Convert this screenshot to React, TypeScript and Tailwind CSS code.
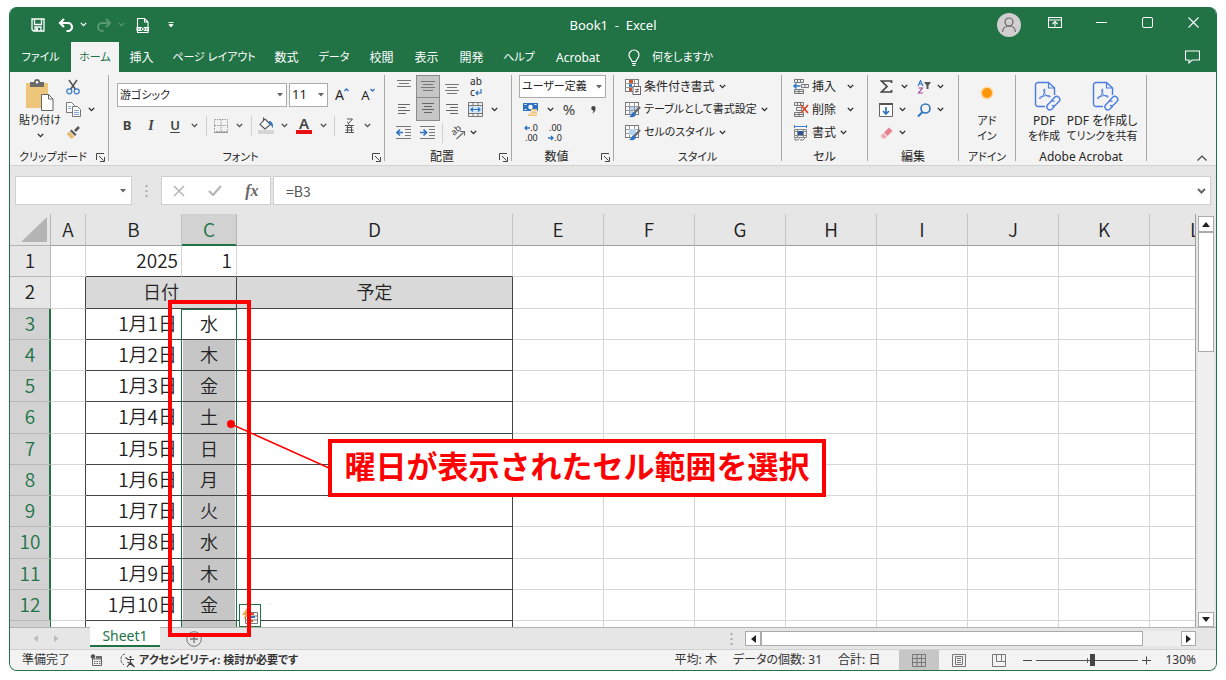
import { useState, type ReactNode } from "react";

// ─── Data ─────────────────────────────────────────────────────────────────────

const TABS = [
  { label: "ファイル", className: "w-[61px] text-[11px]" },
  { label: "ホーム", className: "w-[48px] text-[11px]" },
  { label: "挿入", className: "w-[45px]" },
  { label: "ページ レイアウト", className: "w-[100px] text-[11px]" },
  { label: "数式", className: "w-[45px]" },
  { label: "データ", className: "w-[50px] text-[11px]" },
  { label: "校閲", className: "w-[45px]" },
  { label: "表示", className: "w-[45px]" },
  { label: "開発", className: "w-[45px]" },
  { label: "ヘルプ", className: "w-[50px] text-[11px]" },
  { label: "Acrobat", className: "w-[68px]" },
];

const COLUMNS = [
  { name: "A", width: "w-[35px]" },
  { name: "B", width: "w-[96px]" },
  { name: "C", width: "w-[55px]" },
  { name: "D", width: "w-[276px]" },
  { name: "E", width: "w-[91px]" },
  { name: "F", width: "w-[91px]" },
  { name: "G", width: "w-[91px]" },
  { name: "H", width: "w-[91px]" },
  { name: "I", width: "w-[91px]" },
  { name: "J", width: "w-[91px]" },
  { name: "K", width: "w-[91px]" },
  { name: "L", width: "w-[91px]" },
];

const EMPTY_COLUMNS = COLUMNS.slice(4);

const DAYS = [
  { row: 3, date: "1月1日", day: "水" },
  { row: 4, date: "1月2日", day: "木" },
  { row: 5, date: "1月3日", day: "金" },
  { row: 6, date: "1月4日", day: "土" },
  { row: 7, date: "1月5日", day: "日" },
  { row: 8, date: "1月6日", day: "月" },
  { row: 9, date: "1月7日", day: "火" },
  { row: 10, date: "1月8日", day: "水" },
  { row: 11, date: "1月9日", day: "木" },
  { row: 12, date: "1月10日", day: "金" },
];

// ─── Small building blocks ────────────────────────────────────────────────────

function Svg({ w, h, children }: { w: number; h: number; children: ReactNode }) {
  return (
    <svg width={w} height={h} viewBox={`0 0 ${w} ${h}`} fill="none" className="shrink-0" aria-hidden="true">
      {children}
    </svg>
  );
}

function Chevron({ className = "" }: { className?: string }) {
  return (
    <svg width="7" height="5" viewBox="0 0 7 5" fill="none" className={["shrink-0", className].join(" ")} aria-hidden="true">
      <path d="M0.8 0.9 3.5 3.6 6.2 0.9" stroke="currentColor" strokeWidth="1.3" />
    </svg>
  );
}

function Caret() {
  return (
    <Svg w={6} h={4}>
      <path d="M0 0h6L3 3.5z" fill="#666" />
    </Svg>
  );
}

function Btn({ label, className = "w-6", children }: { label: string; className?: string; children: ReactNode }) {
  return (
    <button type="button" aria-label={label} title={label} className={["flex h-[23px] shrink-0 items-center justify-center", className].join(" ")}>
      {children}
    </button>
  );
}

function Drop({ label, className = "w-4" }: { label: string; className?: string }) {
  return (
    <Btn label={label} className={className}>
      <Chevron />
    </Btn>
  );
}

function Divider() {
  return <span className="h-5 w-px shrink-0 bg-[#d0d0d0]" />;
}

function Group({ title, className, launcher, children }: { title: string; className: string; launcher?: boolean; children: ReactNode }) {
  return (
    <section aria-label={title} className={["flex shrink-0", className].join(" ")}>
      <div className="flex min-w-0 flex-1 flex-col">
        <div className="h-[75px]">{children}</div>
        <div className="flex h-[14px] items-center">
          <h2 className="flex-1 text-center whitespace-nowrap">{title}</h2>
          {launcher && (
            <button type="button" aria-label={`${title}の設定`} className="mr-[3px]">
              <Svg w={9} h={9}>
                <path d="M0.5 7V0.5H8M3 3l4.5 4.5M8.5 4v4.5H4" stroke="#444" />
              </Svg>
            </button>
          )}
        </div>
      </div>
      <span className="h-[86px] w-px bg-[#a8a8a8]" />
    </section>
  );
}

function Combo({ label, value, className }: { label: string; value: string; className: string }) {
  return (
    <div className={["relative shrink-0", className].join(" ")}>
      <select aria-label={label} className="h-full w-full appearance-none border border-[#ababab] bg-white pl-[2px]">
        <option>{value}</option>
      </select>
      <span className="pointer-events-none absolute inset-y-0 right-1 flex items-center">
        <Caret />
      </span>
    </div>
  );
}

// ─── Icons ────────────────────────────────────────────────────────────────────

function PasteIcon() {
  return (
    <Svg w={30} h={33}>
      <rect x="1" y="4" width="22" height="25" fill="#edc57b" />
      <path d="M5 3h4a3 3 0 0 1 6 0h4v5H5z" fill="#6a6a6a" />
      <circle cx="12" cy="3.2" r="1.2" fill="#fff" />
      <path d="M16.5 15.5h7l4.5 4.5v11.5h-11.5z" fill="#fff" stroke="#666" />
      <path d="M23.5 15.5v4.5H28" stroke="#666" />
    </Svg>
  );
}

function CutIcon() {
  return (
    <Svg w={14} h={16}>
      <path d="M3 1l6.5 9.5M11 1 4.5 10.5" stroke="#555" strokeWidth="1.5" />
      <circle cx="3.3" cy="12.3" r="2.5" stroke="#3f7fca" strokeWidth="1.3" />
      <circle cx="10.7" cy="12.3" r="2.5" stroke="#3f7fca" strokeWidth="1.3" />
    </Svg>
  );
}

function CopyIcon() {
  return (
    <Svg w={15} h={15}>
      <path d="M0.5 0.5h5l3 3v7h-8z" fill="#fff" stroke="#777" />
      <path d="M6.5 4.5h5l3 3v7h-8z" fill="#fff" stroke="#777" />
      <path d="M2 4.5h3M2 6.5h3M8 8.5h5M8 10.5h5M8 12.5h5" stroke="#7fa8d8" />
    </Svg>
  );
}

function BrushIcon() {
  return (
    <Svg w={14} h={13}>
      <path d="M13 1 9 5" stroke="#555" strokeWidth="2.5" />
      <path d="m5.5 3.5 5 5-1.5 1.5-5-5z" fill="#555" />
      <path d="m3.5 5.5 5 5-3 2.5L0.5 8z" fill="#e8bd72" />
    </Svg>
  );
}

function LinesIcon({ rows }: { rows: [number, number][] }) {
  return (
    <Svg w={14} h={14}>
      {rows.map(([x, w], i) => (
        <path key={i} d={`M${x} ${1.5 + i * 3}h${w}`} stroke="#666" />
      ))}
    </Svg>
  );
}

function IndentIcon({ right }: { right?: boolean }) {
  return (
    <Svg w={16} h={13}>
      <path d="M0 0.5h15M9 3.5h6M9 6.5h6M9 9.5h6M0 12.5h15" stroke="#777" />
      <path d={right ? "M0 6.5h6M3.5 3.5l3 3-3 3" : "M7 6.5H1M4 3.5l-3 3 3 3"} stroke="#2f72c0" strokeWidth="1.7" />
    </Svg>
  );
}

function TableIcon({ kind }: { kind: "rule" | "table" | "cell" }) {
  return (
    <Svg w={16} h={16}>
      <rect x="0.5" y="0.5" width="13" height="12" fill="#fff" stroke="#777" />
      <path d="M0.5 4.5h13M0.5 8.5h13M4.5 0.5v12M9.5 0.5v12" stroke="#999" />
      {kind === "rule" ? (
        <>
          <path d="M4 1h4v3H4zM4 9h3v3H4z" fill="#d35230" />
          <path d="M4 5h3v3H4z" fill="#3f7fca" />
          <rect x="8" y="7.5" width="7.5" height="8" fill="#fff" stroke="#666" />
          <path d="M10 10.5h4M10 12.5h4M13 9.5l-2 4.5" stroke="#555" strokeWidth="0.8" />
        </>
      ) : (
        <>
          <path d={kind === "table" ? "M5 5h4v3H5zM10 5h3v3h-3zM5 9h3v3H5z" : "M4 4h7v6H4z"} fill="#b8d3ee" />
          <path d="M15 5 9.5 11" stroke="#666" strokeWidth="2.2" />
          <path d="M9 10c-2.500 0-2 3.500-5 4.500 3 1.500 7 0.500 7-2.500z" fill="#2f72c0" />
        </>
      )}
    </Svg>
  );
}

function CellsIcon({ kind }: { kind: "insert" | "delete" | "format" }) {
  if (kind === "format") {
    return (
      <Svg w={15} h={16}>
        <path d="M2 1.5h11M1.5 0v3M13.5 0v3" stroke="#3f7fca" />
        <path d="M1.5 4.5h12v8h-12zM1.5 6.5h12M1.5 10.5h12M4.5 4.5v8M10.5 4.5v8" stroke="#888" />
        <path d="M5 6h5v4H5z" fill="#2b5797" />
        <path d="M2 13v2h3l1.5-1.5M7 15h3l2-2" stroke="#777" />
      </Svg>
    );
  }
  return (
    <Svg w={16} h={15}>
      <path d="M1.5 0.5h9v3h-9zM4.5 0.5v3M7.5 0.5v3M1.5 10.5h9v4h-9zM6 10.5v4M1.5 12.5h9" stroke="#777" />
      {kind === "insert" ? (
        <>
          <path d="M8.5 5.5h7v3h-7zM12 5.5v3" stroke="#777" />
          <path d="M7.5 7H1M3.5 4.5 1 7l2.5 2.5" stroke="#2f72c0" strokeWidth="1.4" />
        </>
      ) : (
        <>
          <path d="M3.5 5.5h5v3h-5z" stroke="#777" />
          <path d="m8 3 7 8M15 3l-7 8" stroke="#d24726" strokeWidth="1.8" />
        </>
      )}
    </Svg>
  );
}

function PdfIcon() {
  return (
    <Svg w={27} h={30}>
      <path d="M11 25.500H4a2.500 2.500 0 0 1-2.500-2.500V4A2.500 2.500 0 0 1 4 1.500h10.500L20.500 7v7" stroke="#4a7be0" strokeWidth="1.4" />
      <path d="M14.5 1.5V7h6" stroke="#4a7be0" strokeWidth="1.2" />
      <path d="M5.500 17.500c-1.500-1.500 5.500-3 8-3 3.500 0 3.500 2 1.500 1.500-2.500-.8-5.500-4-5.300-7 .3-2 1.800-1 1 1.500-.7 2.500-3.200 8-5.200 7z" stroke="#4a7be0" />
      <g stroke="#4a7be0" strokeWidth="1.4">
        <path d="m17 20 3.500-3.500a3 3 0 0 1 4.500 4l-3.500 3.500a3 3 0 0 1-3.500.3" />
        <path d="M20.500 20.500a3 3 0 0 0-3.800.3L13.500 24a3 3 0 0 0 4.200 4.200l3-3" />
      </g>
    </Svg>
  );
}

// ─── Title bar and tabs ───────────────────────────────────────────────────────

function TitleBar() {
  return (
    <header className="relative flex h-[35px] items-center bg-[#217346] text-white">
      <div className="flex items-center pl-5">
        <button type="button" aria-label="上書き保存" className="flex w-4 justify-center">
          <Svg w={14} h={14}>
            <path d="M1 1h12v12H2.5L1 11.5zM3.5 1.5v5h7v-5M4 13V9h6v4" stroke="#fff" strokeWidth="1.3" />
            <path d="M5 10h2v3H5z" fill="#fff" />
          </Svg>
        </button>
        <button type="button" aria-label="元に戻す" className="ml-3 flex w-4 justify-center">
          <Svg w={16} h={14}>
            <path d="M6 1 2 5l4 4M2 5h8a4 4 0 0 1 0 8H8.5" stroke="#fff" strokeWidth="2.2" />
          </Svg>
        </button>
        <Chevron className="ml-[6px]" />
        <button type="button" aria-label="やり直し" className="ml-[9px] flex w-4 justify-center opacity-25">
          <Svg w={16} h={14}>
            <path d="m10 1 4 4-4 4M14 5H6a4 4 0 0 0 0 8h1.5" stroke="#fff" strokeWidth="2" />
          </Svg>
        </button>
        <Chevron className="ml-[6px] opacity-25" />
        <button type="button" aria-label="印刷プレビュー" className="ml-[10px] flex w-4 justify-center">
          <Svg w={14} h={16}>
            <path d="M1.5 10V1.5h7l3.5 3.5v5M8.5 1.5V5H12M1.5 14v1.5H12V14" stroke="#fff" strokeWidth="1.1" />
            <rect x="0.5" y="10" width="12.5" height="4" fill="#fff" />
            <circle cx="6.8" cy="12" r="1.5" stroke="#217346" />
            <path d="M2 12h1.5M10 12h1.5" stroke="#217346" />
          </Svg>
        </button>
        <button type="button" aria-label="クイック アクセスのカスタマイズ" className="ml-3 flex w-4 justify-center">
          <Svg w={6} h={6}>
            <path d="M0.5 0.5h5M1 2.5h4L3 5z" stroke="#fff" fill="#fff" strokeWidth="0.9" />
          </Svg>
        </button>
      </div>

      <h1 className="absolute inset-x-0 pt-[2px] text-center text-[13px]">Book1&nbsp; -&nbsp; Excel</h1>

      <div className="relative ml-auto flex items-center pr-[15px]">
        <button type="button" aria-label="アカウント" className="flex w-6 justify-center">
          <Svg w={24} h={24}>
            <circle cx="12" cy="12" r="12" fill="#d0cece" />
            <circle cx="12" cy="9" r="4" stroke="#666" strokeWidth="1.2" />
            <path d="M5.5 19c.3-4 2.500-6 6.500-6s6.200 2 6.500 6" stroke="#666" strokeWidth="1.2" />
          </Svg>
        </button>
        <button type="button" aria-label="リボンの表示オプション" className="-mt-1 ml-[26px] flex w-4 justify-center">
          <Svg w={14} h={11}>
            <path d="M0.5 0.5h13v10H0.5zM0.5 3h13M7 9.5V5M4.5 7 7 4.5 9.5 7" stroke="#fff" strokeWidth="1.1" />
          </Svg>
        </button>
        <button type="button" aria-label="最小化" className="-mt-1 ml-[30px] flex w-4 justify-center">
          <Svg w={11} h={11}>
            <path d="M0 5.5h11" stroke="#fff" />
          </Svg>
        </button>
        <button type="button" aria-label="最大化" className="-mt-1 ml-[30px] flex w-4 justify-center">
          <Svg w={11} h={11}>
            <rect x="0.5" y="0.5" width="10" height="10" rx="1.5" stroke="#fff" />
          </Svg>
        </button>
        <button type="button" aria-label="閉じる" className="-mt-1 ml-[30px] flex w-4 justify-center">
          <Svg w={11} h={11}>
            <path d="m0.5 0.5 10 10M10.5 0.5l-10 10" stroke="#fff" strokeWidth="1.1" />
          </Svg>
        </button>
      </div>
    </header>
  );
}

function TabStrip({ active, onSelect }: { active: string; onSelect: (label: string) => void }) {
  return (
    <nav className="flex h-[30px] items-stretch bg-[#217346] text-white">
      {TABS.map((tab) => (
        <button
          key={tab.label}
          type="button"
          onClick={() => onSelect(tab.label)}
          className={[
            "shrink-0 pt-px text-center whitespace-nowrap",
            tab.className,
            active === tab.label ? "bg-[#f3f3f3] text-[#217346]" : "",
          ].join(" ")}
        >
          {tab.label}
        </button>
      ))}
      <button type="button" className="ml-4 flex items-center gap-3 text-[11px] whitespace-nowrap">
        <Svg w={12} h={17}>
          <path d="M4 12.500c0-2-3-3-3-6.500a5 5 0 0 1 10 0c0 3.500-3 4.500-3 6.500zM4 14.500h4M4.500 16.300h3" stroke="#fff" strokeWidth="1.2" />
        </Svg>
        何をしますか
      </button>
      <button type="button" aria-label="コメント" className="mr-4 ml-auto flex items-center">
        <Svg w={15} h={14}>
          <path d="M0.5 1h14v9H7l-3 3v-3H0.5z" stroke="#fff" strokeWidth="1.1" />
        </Svg>
      </button>
    </nav>
  );
}

// ─── Ribbon ───────────────────────────────────────────────────────────────────

function Ribbon() {
  return (
    <div className="flex h-[94px] border-b border-[#d2d2d2] bg-[#f3f3f3] pt-[3px] pb-px text-[#262626]">
      <Group title="クリップボード" className="w-[99px] text-[11px]" launcher>
        <div className="flex pl-2">
          <button type="button" className="flex w-11 flex-col items-center pt-1">
            <PasteIcon />
            <span className="leading-4 whitespace-nowrap">貼り付け</span>
            <Chevron className="mt-[5px]" />
          </button>
          <div className="ml-[1px] flex flex-col">
            <Btn label="切り取り" className="w-5">
              <CutIcon />
            </Btn>
            <div className="flex">
              <Btn label="コピー" className="w-5">
                <CopyIcon />
              </Btn>
              <Drop label="コピーのオプション" />
            </div>
            <Btn label="書式のコピー" className="w-5">
              <BrushIcon />
            </Btn>
          </div>
        </div>
      </Group>

      <Group title="フォント" className="w-[276px] text-[11px]" launcher>
        <div className="flex items-center gap-[2px] pt-2 pl-2">
          <Combo label="フォント名" value="游ゴシック" className="h-6 w-[170px]" />
          <Combo label="フォント サイズ" value="11" className="h-6 w-[39px] text-[13px]" />
          <Btn label="フォント サイズの拡大" className="w-6">
            <span className="text-[14px] leading-4">A</span>
            <Svg w={5} h={14}>
              <path d="M0.5 3 2.5 1l2 2" stroke="#2f72c0" strokeWidth="1.3" />
            </Svg>
          </Btn>
          <Btn label="フォント サイズの縮小" className="w-6">
            <span className="text-[13px] leading-4">A</span>
            <Svg w={5} h={14}>
              <path d="m0.5 1 2 2 2-2" stroke="#2f72c0" strokeWidth="1.3" />
            </Svg>
          </Btn>
        </div>
        <div className="flex items-center pt-[7px] pl-[6px] text-[#444]">
          <Btn label="太字" className="w-6">
            <b className="text-[13px]">B</b>
          </Btn>
          <Btn label="斜体" className="w-6">
            <i className="font-['Liberation_Serif',serif] text-[14px] font-bold">I</i>
          </Btn>
          <Btn label="下線" className="w-6">
            <span className="text-[13px] font-semibold underline underline-offset-2">U</span>
          </Btn>
          <Drop label="下線の種類" className="w-[14px]" />
          <span className="w-[5px]" />
          <Divider />
          <Btn label="罫線" className="ml-1 w-5">
            <Svg w={14} h={14}>
              <path d="M0.5 0.5h13v12H0.5zM7 0.5v12M0.5 6.5h13" stroke="#999" strokeDasharray="1.5 1" />
              <path d="M0 13.5h14" stroke="#999" />
            </Svg>
          </Btn>
          <Drop label="罫線の種類" />
          <span className="w-1" />
          <Divider />
          <Btn label="塗りつぶしの色" className="ml-1 w-5">
            <Svg w={17} h={17}>
              <path d="m7 2 5.5 5.5L7 12 2 7.5zM5.5 0.5v4" stroke="#555" strokeWidth="1.1" fill="#fff" />
              <path d="M11 4c3 0 4.500 3 4 7-1.500-1-1.500-4-4-4z" fill="#2f72c0" />
              <rect y="13" width="16" height="4" fill="#d6d6d6" />
            </Svg>
          </Btn>
          <Drop label="塗りつぶしの色を選択" />
          <Btn label="フォントの色" className="w-6">
            <span className="flex h-[17px] w-4 items-end justify-center border-b-4 border-[#e81010] text-[15px] leading-[13px] font-semibold">A</span>
          </Btn>
          <Drop label="フォントの色を選択" className="w-[14px]" />
          <span className="w-1" />
          <Divider />
          <Btn label="ふりがな" className="ml-1 w-5">
            <Svg w={11} h={15}>
              <path d="M3 1h5.5L5 5M3.5 3.5 5 7M1 7.5h9M1 14.5h9M2.5 9.5h6M1.5 12h8M3.5 7.5v7M7.5 7.5v7" stroke="#555" />
            </Svg>
          </Btn>
          <Drop label="ふりがなのオプション" />
        </div>
      </Group>

      <Group title="配置" className="w-[127px]" launcher>
        <div className="flex flex-col pl-[7px]">
          <div className="flex">
            <Btn label="上揃え">
              <Svg w={14} h={14}>
                <path d="M0 0.5h14M2 3.5h10M0 6.5h14" stroke="#777" />
              </Svg>
            </Btn>
            <Btn label="上下中央揃え" className="w-6 border border-[#8c8c8c] bg-[#c6c6c6]">
              <Svg w={14} h={14}>
                <path d="M0 1.5h14M2 4.5h10M0 7.5h14M2 10.5h10" stroke="#777" />
              </Svg>
            </Btn>
            <Btn label="下揃え">
              <Svg w={14} h={14}>
                <path d="M0 4.5h14M2 7.5h10M0 10.5h14M2 13.5h10" stroke="#777" />
              </Svg>
            </Btn>
            <Btn label="折り返して全体を表示する">
              <span className="flex flex-col text-[10px] leading-[11px]">
                <span>ab</span>
                <span className="flex items-center">
                  c
                  <Svg w={7} h={7}>
                    <path d="M6 0v4H1M3 2 1 4l2 2" stroke="#2f72c0" strokeWidth="1.2" />
                  </Svg>
                </span>
              </span>
            </Btn>
          </div>
          <div className="flex">
            <Btn label="左揃え">
              <LinesIcon rows={[[1, 12], [1, 8], [1, 12], [1, 8]]} />
            </Btn>
            <Btn label="中央揃え" className="w-6 border border-t-0 border-[#8c8c8c] bg-[#c6c6c6]">
              <LinesIcon rows={[[1, 12], [3, 8], [1, 12], [3, 8]]} />
            </Btn>
            <Btn label="右揃え">
              <LinesIcon rows={[[1, 12], [5, 8], [1, 12], [5, 8]]} />
            </Btn>
            <Btn label="セルを結合して中央揃え">
              <Svg w={16} h={15}>
                <path d="M0.5 0.5h14v14h-14zM0.5 3.5h14M0.5 11.5h14M5 0.5v3M10 0.5v3M5 11.5v3M10 11.5v3" stroke="#777" />
                <path d="M1 4h13v7H1z" fill="#d5e6f7" />
                <path d="M2.5 7.5h10M5 5.5l-2 2 2 2M10 5.5l2 2-2 2" stroke="#2f72c0" strokeWidth="1.2" />
              </Svg>
            </Btn>
            <Drop label="結合のオプション" className="w-3" />
          </div>
          <div className="flex items-center">
            <Btn label="インデントを減らす">
              <IndentIcon />
            </Btn>
            <Btn label="インデントを増やす">
              <IndentIcon right />
            </Btn>
            <span className="w-[2px]" />
            <Divider />
            <Btn label="方向" className="ml-[2px] w-6">
              <Svg w={17} h={17}>
                <text x="5" y="12" fontSize="9" fill="#444" transform="rotate(-42 5 12)">ab</text>
                <path d="M7.5 15 14.5 8.5M11 7.5h4.5v4" stroke="#666" strokeWidth="1.1" />
              </Svg>
            </Btn>
            <Drop label="方向のオプション" className="w-2" />
          </div>
        </div>
      </Group>

      <Group title="数値" className="w-[102px]" launcher>
        <div className="flex flex-col pl-[7px]">
          <Combo label="表示形式" value="ユーザー定義" className="h-[23px] w-[87px] text-[11px]" />
          <div className="flex">
            <Btn label="通貨表示形式">
              <Svg w={16} h={15}>
                <rect x="0" y="1" width="15" height="8" fill="#2f72c0" />
                <path d="M1.5 2.5h2M11.5 2.5h2M1.5 7.5h2" stroke="#fff" />
                <circle cx="7.5" cy="5" r="2.2" fill="#fff" />
                <path d="M8 7h6v7H8zM5 11h5v3H5z" fill="#edc57b" />
                <path d="M8 9h6M5 12h9" stroke="#fff" strokeWidth="0.7" />
              </Svg>
            </Btn>
            <Drop label="通貨のオプション" className="w-[14px]" />
            <Btn label="パーセント スタイル" className="w-6">
              <span className="text-[15px] text-[#444]">%</span>
            </Btn>
            <Btn label="桁区切りスタイル" className="w-6">
              <Svg w={5} h={8}>
                <path d="M2.500 0a2 2 0 0 1 2 2.500C4.500 5 3 7 1 7.500 2 6.500 2.500 5.500 2.500 4.500A2.200 2.200 0 0 1 2.500 0z" fill="#444" />
              </Svg>
            </Btn>
          </div>
          <div className="flex text-[9px] leading-[10px]">
            <Btn label="小数点以下の表示桁数を増やす">
              <span className="flex flex-col items-end">
                <span className="flex items-center">
                  <Svg w={6} h={6}>
                    <path d="M6 3H1M3 1 1 3l2 2" stroke="#2f72c0" strokeWidth="1.3" />
                  </Svg>
                  .0
                </span>
                <span>.00</span>
              </span>
            </Btn>
            <Btn label="小数点以下の表示桁数を減らす">
              <span className="flex flex-col items-end">
                <span>.00</span>
                <span className="flex items-center">
                  <Svg w={6} h={6}>
                    <path d="M0 3h5M3 1l2 2-2 2" stroke="#2f72c0" strokeWidth="1.3" />
                  </Svg>
                  .0
                </span>
              </span>
            </Btn>
          </div>
        </div>
      </Group>

      <Group title="スタイル" className="w-[168px] text-[11px]">
        <div className="flex flex-col items-start pl-[11px] whitespace-nowrap">
          <button type="button" className="flex h-[23px] items-center gap-[3px] text-[12px]">
            <TableIcon kind="rule" />
            条件付き書式
            <Chevron className="ml-[1px]" />
          </button>
          <button type="button" className="flex h-[23px] items-center gap-[3px]">
            <TableIcon kind="table" />
            テーブルとして書式設定
            <Chevron className="ml-[1px]" />
          </button>
          <button type="button" className="flex h-[23px] items-center gap-[3px]">
            <TableIcon kind="cell" />
            セルのスタイル
            <Chevron className="ml-[1px]" />
          </button>
        </div>
      </Group>

      <Group title="セル" className="w-[86px]">
        <div className="flex flex-col items-start pl-[11px] whitespace-nowrap">
          <button type="button" className="flex h-[23px] items-center gap-[3px]">
            <CellsIcon kind="insert" />
            挿入
            <Chevron className="ml-2" />
          </button>
          <button type="button" className="flex h-[23px] items-center gap-[3px]">
            <CellsIcon kind="delete" />
            削除
            <Chevron className="ml-2" />
          </button>
          <button type="button" className="flex h-[23px] items-center gap-1">
            <CellsIcon kind="format" />
            書式
            <Chevron />
          </button>
        </div>
      </Group>

      <Group title="編集" className="w-[91px]">
        <div className="flex flex-col pl-2">
          <div className="flex">
            <Btn label="オート SUM" className="w-5">
              <Svg w={13} h={13}>
                <path d="M11.5 3V1H1.5L7 6.5 1.5 12h10v-2" stroke="#444" strokeWidth="1.7" />
              </Svg>
            </Btn>
            <Drop label="オート SUM のオプション" />
            <Btn label="並べ替えとフィルター" className="w-6">
              <Svg w={14} h={14}>
                <path d="M1 6 3.500 0.500 6 6M2 4h3" stroke="#2f72c0" strokeWidth="1.1" />
                <path d="M1.500 8h4l-4 5h4.500" stroke="#a349a4" strokeWidth="1.2" />
                <path d="M7 2h7l-2.500 3.500V9h-2V5.500z" fill="#555" />
              </Svg>
            </Btn>
            <Drop label="並べ替えのオプション" className="w-2" />
          </div>
          <div className="flex">
            <Btn label="フィル" className="w-5">
              <Svg w={14} h={14}>
                <path d="M0.5 0.5h13v13h-13z" fill="#fff" stroke="#666" />
                <path d="M0 1h14" stroke="#555" strokeWidth="2" />
                <path d="M7 4v7M4 8l3 3 3-3" stroke="#2f72c0" strokeWidth="1.7" />
              </Svg>
            </Btn>
            <Drop label="フィルのオプション" className="w-3" />
            <Btn label="検索と選択" className="ml-1 w-6">
              <Svg w={14} h={14}>
                <circle cx="8.5" cy="5.5" r="4.5" stroke="#2f72c0" strokeWidth="1.6" />
                <path d="M5.5 9 1 13.5" stroke="#2f72c0" strokeWidth="2" />
              </Svg>
            </Btn>
            <Drop label="検索のオプション" className="w-2" />
          </div>
          <div className="flex">
            <Btn label="クリア" className="w-5">
              <Svg w={13} h={12}>
                <path d="m9 0.5 3.5 3.5-5 5L4 5.5z" fill="#e8808f" />
                <path d="m3.3 6.2 3.5 3.5L5 11.5H3L0.5 9z" fill="#f0a5b0" />
              </Svg>
            </Btn>
            <Drop label="クリアのオプション" className="w-3" />
          </div>
        </div>
      </Group>

      <Group title="アドイン" className="w-[57px] text-[11px]">
        <button type="button" className="flex w-full flex-col items-center pt-[11px] leading-[15px]">
          <Svg w={14} h={14}>
            <circle cx="7" cy="7" r="6.5" fill="#ffd9a0" />
            <circle cx="7" cy="7" r="5" fill="#ff960a" />
          </Svg>
          <span className="mt-[13px]">アド</span>
          <span>イン</span>
        </button>
      </Group>

      <Group title="Adobe Acrobat" className="w-[131px]">
        <div className="flex leading-[15px] whitespace-nowrap">
          <button type="button" className="flex w-[56px] flex-col items-center pt-[6px]">
            <span className="pl-[6px]">
              <PdfIcon />
            </span>
            <span className="mt-[2px]">PDF</span>
            <span className="text-[11px]">を作成</span>
          </button>
          <button type="button" className="flex w-[60px] flex-col items-center pt-[6px]">
            <span className="pl-[6px]">
              <PdfIcon />
            </span>
            <span className="mt-[2px]">PDF を作成し</span>
            <span className="text-[11px]">てリンクを共有</span>
          </button>
        </div>
      </Group>

      <button type="button" aria-label="リボンを折りたたむ" className="mr-[9px] ml-auto self-end pb-[3px]">
        <Svg w={10} h={6}>
          <path d="m0.5 5.5 4.5-4.5L9.5 5.5" stroke="#444" strokeWidth="1.2" />
        </Svg>
      </button>
    </div>
  );
}

// ─── Formula bar ──────────────────────────────────────────────────────────────

function FormulaBar() {
  return (
    <div className="flex h-12 bg-[#e6e6e6] pt-[10px] pr-[5px] pb-[9px] pl-[5px]">
      <div className="flex w-[117px] items-center border border-[#cfcfcf] bg-white pr-[5px]">
        <input aria-label="名前ボックス" className="min-w-0 flex-1 px-1 outline-none" />
        <Caret />
      </div>
      <div className="flex w-[29px] items-center justify-center">
        <Svg w={3} h={12}>
          <path d="M1.5 0v12" stroke="#aaa" strokeWidth="2" strokeDasharray="2 3" />
        </Svg>
      </div>
      <div className="flex w-[110px] items-center justify-around border border-[#cfcfcf] bg-white">
        <button type="button" aria-label="キャンセル">
          <Svg w={12} h={12}>
            <path d="m1 1 10 10M11 1 1 11" stroke="#b5b5b5" strokeWidth="1.5" />
          </Svg>
        </button>
        <button type="button" aria-label="入力">
          <Svg w={14} h={11}>
            <path d="m1 6 4 4L13 1" stroke="#b5b5b5" strokeWidth="2.2" />
          </Svg>
        </button>
        <button type="button" aria-label="関数の挿入" className="font-['Liberation_Serif',serif] text-[16px] leading-4 font-bold text-[#666] italic">
          fx
        </button>
      </div>
      <div className="ml-[2px] flex flex-1 items-center border border-[#cfcfcf] bg-white pr-1">
        <input aria-label="数式バー" defaultValue="=B3" className="min-w-0 flex-1 pl-3 font-['Noto_Sans_CJK_JP',sans-serif] text-[14px] leading-5 text-[#555] outline-none" />
        <Svg w={9} h={6}>
          <path d="m1 1 3.5 3.5L8 1" stroke="#666" strokeWidth="2" />
        </Svg>
      </div>
    </div>
  );
}

// ─── Sheet ────────────────────────────────────────────────────────────────────

const CELL = "border-r border-b p-0 pb-[3px] whitespace-nowrap ";
const LIGHT = CELL + "border-[#d6d6d6]";
const DARK = CELL + "border-[#444]";
const ROW_HEAD = "border-r border-b p-0 pb-[3px] text-center text-[19px] font-[350] ";

function EmptyCells() {
  return EMPTY_COLUMNS.map((c) => <td key={c.name} className={LIGHT} />);
}

function Sheet() {
  return (
    <table className="w-[1231px] table-fixed border-separate border-spacing-0 bg-white text-[18px] leading-6 font-[350] text-[#222]">
      <colgroup>
        <col className="w-[41px]" />
        {COLUMNS.map((c) => (
          <col key={c.name} className={c.width} />
        ))}
      </colgroup>
      <thead>
        <tr className="h-8 bg-[#e6e6e6]">
          <th aria-label="すべて選択" className="border-r border-b border-[#b4b4b4] p-0">
            <span className="flex justify-end pr-[3px]">
              <Svg w={26} h={25}>
                <path d="M26 0v25H0z" fill="#b4b4b4" />
              </Svg>
            </span>
          </th>
          {COLUMNS.map((c) => (
            <th
              key={c.name}
              scope="col"
              className={[
                "border-r border-b p-0 pb-[2px] text-[19px] font-[350]",
                c.name === "C" ? "border-r-[#b4b4b4] border-b-[#217346] bg-[#d2d2d2] text-[#217346] shadow-[inset_0_-1px_#217346]" : "border-r-[#c4c4c4] border-b-[#a0a0a0]",
              ].join(" ")}
            >
              {c.name}
            </th>
          ))}
        </tr>
      </thead>
      <tbody>
        <tr className="h-[31px]">
          <th scope="row" className={ROW_HEAD + "border-[#b9b9b9] bg-[#e6e6e6]"}>1</th>
          <td className={LIGHT} />
          <td className={CELL + "border-r-[#d6d6d6] border-b-[#444] pr-[3px] text-right text-[19px]"}>2025</td>
          <td className={CELL + "border-r-[#d6d6d6] border-b-[#444] pr-1 text-right text-[19px]"}>1</td>
          <td className={CELL + "border-r-[#d6d6d6] border-b-[#444]"} />
          <EmptyCells />
        </tr>
        <tr className="h-8">
          <th scope="row" className={ROW_HEAD + "border-[#b9b9b9] bg-[#e6e6e6]"}>2</th>
          <td className={CELL + "border-r-[#444] border-b-[#d6d6d6]"} />
          <td colSpan={2} className={DARK + " bg-[#d9d9d9] text-center"}>日付</td>
          <td className={DARK + " bg-[#d9d9d9] text-center"}>予定</td>
          <EmptyCells />
        </tr>
        {DAYS.map((d) => (
          <tr key={d.row} className={d.row % 4 === 2 ? "h-8" : "h-[31px]"}>
            <th scope="row" className={ROW_HEAD + "border-r-[#217346] border-b-[#b9b9b9] bg-[#d2d2d2] text-[#217346] shadow-[inset_-1px_0_#217346]"}>{d.row}</th>
            <td className={CELL + "border-r-[#444] border-b-[#d6d6d6]"} />
            <td className={CELL + "border-r-[#217346] border-b-[#444] pr-1 text-right text-[19px]"}>{d.date}</td>
            <td
              className={[
                CELL,
                "border-r-[#217346] border-b-[#444] text-center",
                d.row === 3 ? "shadow-[inset_0_1px_#217346]" : "bg-[#c6c6c6] shadow-[inset_1px_0_#fff,inset_-1px_0_#fff]",
              ].join(" ")}
            >
              {d.day}
            </td>
            <td className={DARK} />
            <EmptyCells />
          </tr>
        ))}
        <tr className="h-[31px]">
          <th className={ROW_HEAD + "border-r-[#217346] border-b-[#b9b9b9] bg-[#d2d2d2]"} />
          <td className={CELL + "border-r-[#444] border-b-[#d6d6d6]"} />
          <td className={CELL + "border-r-[#217346] border-b-[#444]"} />
          <td className={CELL + "border-r-[#217346] border-b-[#444] bg-[#c6c6c6]"} />
          <td className={DARK} />
          <EmptyCells />
        </tr>
      </tbody>
    </table>
  );
}

function VerticalScroll() {
  return (
    <div className="mr-[2px] ml-[2px] flex w-4 flex-col bg-[#f0f0f0]">
      <div className="h-[2px] bg-[#e6e6e6]" />
      <button type="button" aria-label="上へスクロール" className="flex h-4 items-center justify-center border border-[#ababab] bg-white">
        <Svg w={8} h={5}>
          <path d="M0 5h8L4 0z" fill="#222" />
        </Svg>
      </button>
      <div className="h-[120px] border border-[#ababab] bg-white" />
      <button type="button" aria-label="下へスクロール" className="mt-auto flex h-[15px] items-center justify-center border border-[#ababab] bg-white">
        <Svg w={8} h={5}>
          <path d="M0 0h8L4 5z" fill="#222" />
        </Svg>
      </button>
    </div>
  );
}

function SheetTabs() {
  return (
    <div className="flex h-[22px] bg-[#e6e6e6]">
      <div className="flex w-20 items-center justify-center gap-4 border-t border-[#b4b4b4] pr-2">
        <button type="button" aria-label="前のシート">
          <Svg w={5} h={7}>
            <path d="M5 0v7L0.5 3.5z" fill="#bbb" />
          </Svg>
        </button>
        <button type="button" aria-label="次のシート">
          <Svg w={5} h={7}>
            <path d="M0 0v7l4.5-3.5z" fill="#bbb" />
          </Svg>
        </button>
      </div>
      <button type="button" className="mb-[2px] w-[70px] border-b-2 border-[#217346] bg-white text-[14px] leading-4 text-[#217346]">
        Sheet1
      </button>
      <div className="flex flex-1 items-center border-t border-[#b4b4b4]">
        <button type="button" aria-label="新しいシート" className="ml-[26px]">
          <Svg w={16} h={16}>
            <circle cx="8" cy="8" r="7.3" stroke="#777" />
            <path d="M8 4v8M4 8h8" stroke="#777" strokeWidth="1.3" />
          </Svg>
        </button>
        <span className="mr-3 ml-auto">
          <Svg w={3} h={12}>
            <path d="M1.5 0v12" stroke="#aaa" strokeWidth="2" strokeDasharray="2 3" />
          </Svg>
        </span>
        {/* Horizontal scroll bar */}
        <div className="mr-[20px] flex h-[15px] w-[451px] bg-[#f0f0f0]">
          <button type="button" aria-label="左へスクロール" className="flex w-4 items-center justify-center border border-[#ababab] bg-white">
            <Svg w={5} h={8}>
              <path d="M5 0v8L0 4z" fill="#222" />
            </Svg>
          </button>
          <div className="w-[382px] border border-[#ababab] bg-white" />
          <button type="button" aria-label="右へスクロール" className="ml-auto flex w-[15px] items-center justify-center border border-[#ababab] bg-white">
            <Svg w={5} h={8}>
              <path d="M0 0v8l5-4z" fill="#222" />
            </Svg>
          </button>
        </div>
      </div>
    </div>
  );
}

function StatusBar() {
  const [zoom, setZoom] = useState(130);

  return (
    <footer className="flex h-[21px] items-center border-t border-[#d0d0d0] bg-[#f3f3f3] whitespace-nowrap text-[#333]">
      <span className="ml-3">準備完了</span>
      <button type="button" aria-label="マクロの記録" className="ml-[20px]">
        <Svg w={13} h={12}>
          <path d="M2.5 4v7.5h9V2.5H6M2.5 5h9" stroke="#666" />
          <path d="M4 7.5h6.5M4 9.5h6.5" stroke="#666" strokeDasharray="1.5 1" />
          <circle cx="3" cy="2.5" r="2.3" fill="#555" />
          <path d="M6 3.5h5.5" stroke="#666" strokeWidth="2" />
        </Svg>
      </button>
      <button type="button" className="ml-[17px] flex items-center gap-[3px] text-[11px] font-bold">
        <Svg w={16} h={15}>
          <path d="M5 1C0 2-0.500 9 4 12" stroke="#555" strokeDasharray="3 1" />
          <path d="M5.500 4.500 8 6.500h6M10.500 6.500v3L7 14M10.500 9.500 14.500 14M7.500 9l6 4" stroke="#444" strokeWidth="1.2" />
          <circle cx="10.5" cy="4.2" r="1.1" fill="#444" />
        </Svg>
        アクセシビリティ: 検討が必要です
      </button>

      <div className="ml-auto flex items-center gap-4">
        <span>平均: 木</span>
        <span>データの個数: 31</span>
        <span>合計: 日</span>
      </div>
      <div className="ml-[19px] flex h-full">
        <button type="button" aria-label="標準" className="flex w-10 items-center justify-center bg-[#c6c6c6]">
          <Svg w={14} h={13}>
            <path d="M0.5 0.5h13v12H0.5zM0.5 4.5h13M0.5 8.5h13M5 0.5v12M9.5 0.5v12" stroke="#777" />
          </Svg>
        </button>
        <button type="button" aria-label="ページ レイアウト表示" className="flex w-10 items-center justify-center">
          <Svg w={14} h={13}>
            <path d="M0.5 0.5h13v12H0.5zM3.5 2.5h7v8h-7zM5 4.5h4M5 6.5h4M5 8.5h4" stroke="#777" />
          </Svg>
        </button>
        <button type="button" aria-label="改ページ プレビュー" className="flex w-10 items-center justify-center">
          <Svg w={14} h={13}>
            <path d="M0.5 0.5h13v12H0.5zM4.5 0.5v7h5v-7M9.5 7.5h4" stroke="#777" />
          </Svg>
        </button>
      </div>
      <button type="button" aria-label="縮小" className="ml-1">
        <Svg w={9} h={9}>
          <path d="M0 4.5h9" stroke="#444" />
        </Svg>
      </button>
      <div className="relative mx-1 flex items-center">
        <span className="absolute left-1/2 h-[5px] w-px bg-[#666]" />
        <input
          type="range"
          aria-label="ズーム"
          min={10}
          max={228}
          value={zoom}
          onChange={(e) => setZoom(Number(e.target.value))}
          className="relative h-3 w-[102px] appearance-none bg-transparent [&::-webkit-slider-runnable-track]:h-px [&::-webkit-slider-runnable-track]:bg-[#555] [&::-webkit-slider-thumb]:-mt-[6px] [&::-webkit-slider-thumb]:h-3 [&::-webkit-slider-thumb]:w-[5px] [&::-webkit-slider-thumb]:appearance-none [&::-webkit-slider-thumb]:bg-[#444]"
        />
      </div>
      <button type="button" aria-label="拡大">
        <Svg w={9} h={9}>
          <path d="M0 4.5h9M4.5 0.5v8" stroke="#444" />
        </Svg>
      </button>
      <span className="mr-5 ml-[14px]">{zoom}%</span>
    </footer>
  );
}

// ─── Annotation over the sheet ────────────────────────────────────────────────

function Annotation() {
  return (
    <div className="pointer-events-none absolute inset-0">
      <div className="absolute top-[293px] left-[158px] h-[337px] w-[83px] border-4 border-[#f00]" />
      <svg className="absolute top-[410px] left-[215px]" width="110" height="60" viewBox="0 0 110 60" fill="none" aria-hidden="true">
        <path d="M6 7 104 51" stroke="#f00" strokeWidth="1.5" />
        <circle cx="6" cy="7" r="4" fill="#f00" />
      </svg>
      <p className="absolute top-[432px] left-[318px] flex h-[58px] w-[498px] items-center justify-center border-4 border-[#f00] bg-white pb-1 text-[31px] leading-none font-bold whitespace-nowrap text-[#f00] [font-feature-settings:normal]">
        曜日が表示されたセル範囲を選択
      </p>
    </div>
  );
}

export default function App() {
  const [tab, setTab] = useState("ホーム");

  return (
    <div className="flex h-screen min-h-[400px] bg-white px-[9px] pt-[7px] pb-[9px]">
      <div className="relative flex min-w-0 flex-1 flex-col overflow-hidden rounded-lg border-x border-b border-[#217346] bg-[#e6e6e6] font-['Noto_Sans','Noto_Sans_CJK_JP',sans-serif] text-[12px] [font-feature-settings:'palt']">
        <TitleBar />
        <TabStrip active={tab} onSelect={setTab} />
        <Ribbon />
        <FormulaBar />
        <main className="flex min-h-0 flex-1">
          <div className="relative min-w-0 flex-1 overflow-hidden border-r border-[#a0a0a0] font-['Noto_Sans_CJK_JP',sans-serif] [font-feature-settings:normal]">
            <Sheet />
            <button type="button" aria-label="クイック分析" className="absolute bottom-0 left-[229px] flex h-[23px] w-[22px] items-center justify-center border border-[#217346] bg-white">
              <Svg w={16} h={16}>
                <path d="M3.5 4.5h12v11h-12zM3.5 8h12M3.5 12h12" stroke="#777" fill="#fff" />
                <path d="M8 8h5v2H8z" fill="#2f72c0" />
                <path d="M8 5h4v2H8zM8 12h3v2H8z" fill="#d35230" />
                <path d="M5 0 0 7h3l-2 5 6-7H4l3-5z" fill="#f0ab4b" />
              </Svg>
            </button>
          </div>
          <VerticalScroll />
        </main>
        <SheetTabs />
        <StatusBar />
        <Annotation />
      </div>
    </div>
  );
}
